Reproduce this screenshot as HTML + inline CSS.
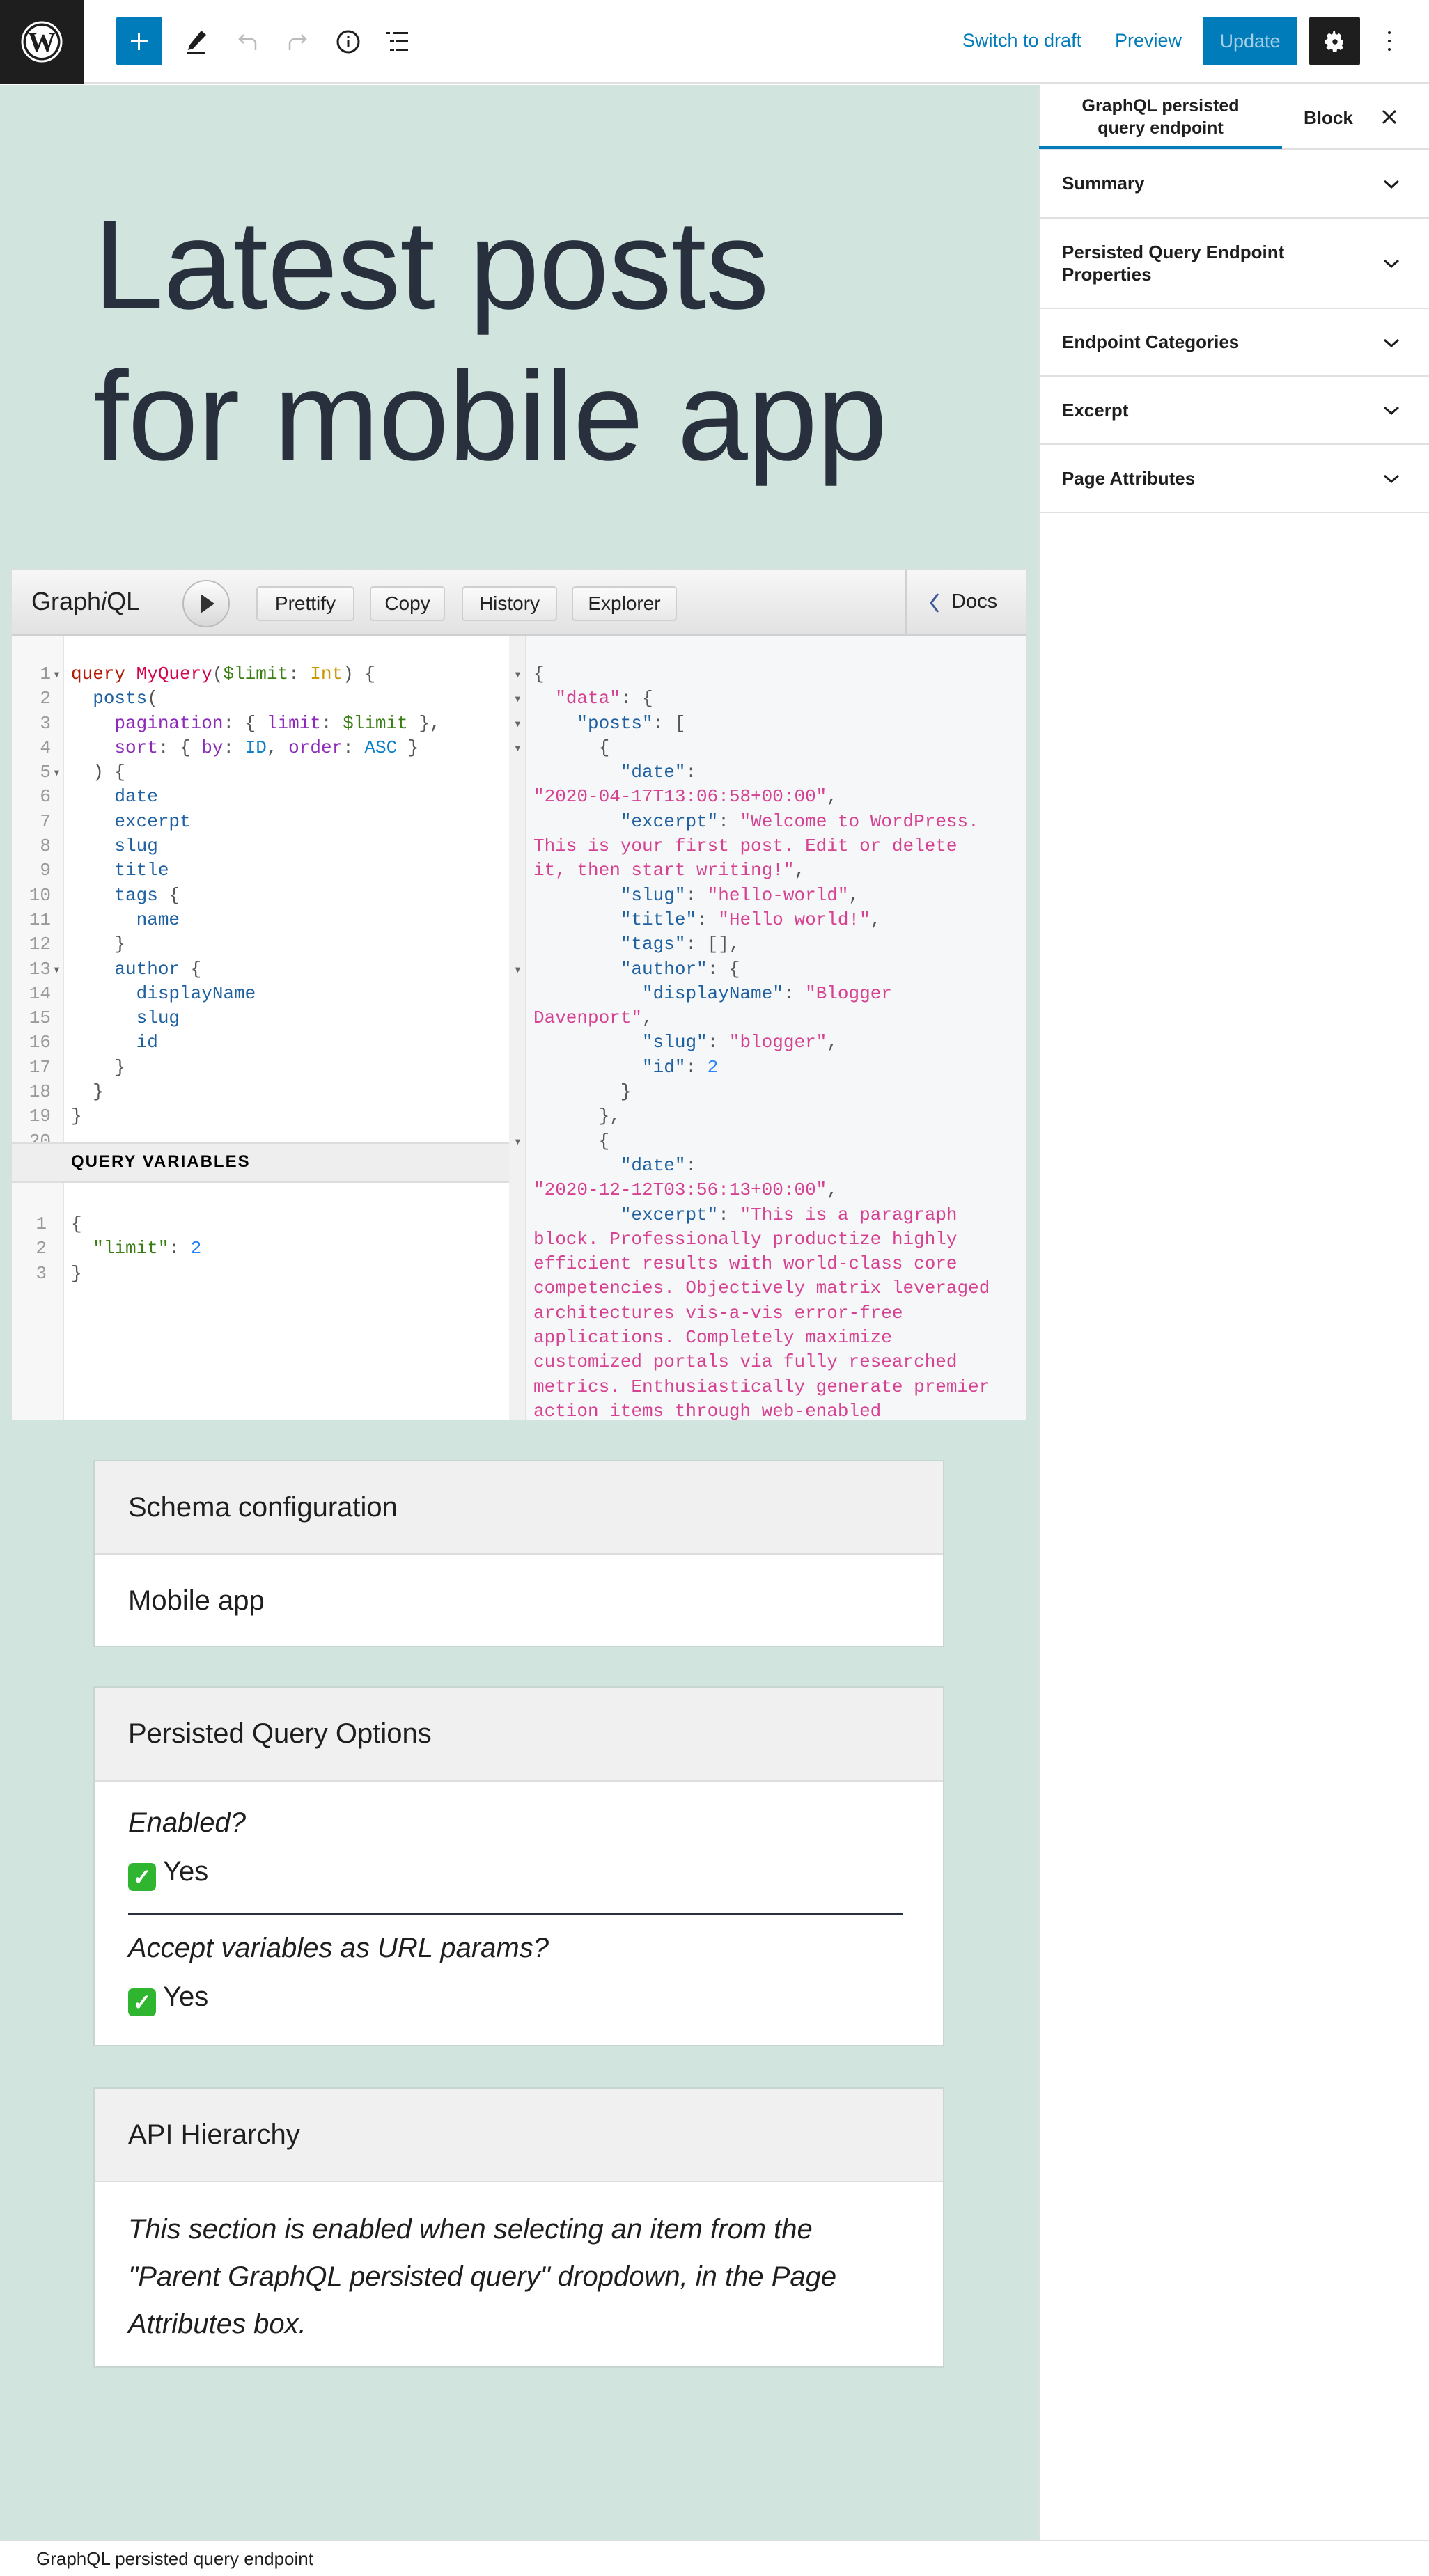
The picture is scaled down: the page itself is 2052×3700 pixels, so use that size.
<!DOCTYPE html>
<html><head><meta charset="utf-8"><style>
*{box-sizing:border-box;margin:0;padding:0}
body{width:2052px;height:3700px;position:relative;background:#fff;font-family:"Liberation Sans",sans-serif;overflow:hidden;color:#1e1e1e}
.a{position:absolute}
.mono{font-family:"Liberation Mono","DejaVu Sans Mono",monospace;font-size:26px;line-height:35.3px;white-space:pre}
.kw{color:#b11a04}.df{color:#d2054e}.vr{color:#397d13}.ty{color:#ca9800}.pr{color:#1f61a0}.ar{color:#8b2bb9}.en{color:#0b7fc7}.st{color:#d64292}.nm{color:#2882f9}.pu{color:#555}
.btn{position:absolute;top:842px;height:50px;border:2px solid #cfcfcf;border-radius:5px;background:linear-gradient(#fbfbfb,#e8e8e8);font-size:28px;line-height:46px;text-align:center;color:#222}
.panel{position:absolute;left:1492px;width:560px;border-bottom:2px solid #e0e0e0;font-size:26px;font-weight:bold;color:#1e1e1e;padding-left:33px;display:flex;align-items:center}
.chev{position:absolute;right:42px;top:50%;margin-top:-10px}
.box{position:absolute;left:134px;width:1222px;background:#fff;border:2px solid #c8d6d0}
.bh{background:#f0f0f0;border-bottom:2px solid #ddd;font-size:40px;padding-left:48px;display:flex;align-items:center}
.bt{font-size:40px;padding-left:48px}
.ck{display:inline-block;width:40px;height:40px;background:#2fb52f;border-radius:7px;color:#fff;font-size:32px;line-height:40px;text-align:center;font-weight:bold;vertical-align:-6px;margin-right:10px}
.fold{font-size:13px;color:#666;line-height:35.3px;white-space:pre}
</style></head><body>
<!-- top bar -->
<div class="a" style="left:0;top:0;width:2052px;height:120px;border-bottom:2px solid #e0e0e0;background:#fff"></div>
<div class="a" style="left:0;top:0;width:120px;height:120px;background:#1e1e1e"></div>
<svg class="a" style="left:30px;top:30px" width="60" height="60" viewBox="0 0 60 60"><circle cx="30" cy="30" r="28" fill="none" stroke="#fff" stroke-width="3"/><circle cx="30" cy="30" r="23" fill="#fff"/><text x="30" y="44" text-anchor="middle" font-family="Liberation Serif" font-size="40" font-weight="bold" fill="#1e1e1e">W</text></svg>
<div class="a" style="left:167px;top:24px;width:66px;height:70px;background:#007cba;border-radius:3px"></div>
<div class="a" style="left:188px;top:58px;width:24px;height:3px;background:#fff"></div>
<div class="a" style="left:198px;top:48px;width:3px;height:24px;background:#fff"></div>
<svg class="a" style="left:265px;top:40px" width="36" height="40" viewBox="0 0 36 40"><path d="M24 4 L31 10 L12 30 L5 32 L7 25 Z" fill="#1e1e1e"/><rect x="4" y="35" width="26" height="3" fill="#1e1e1e"/></svg>
<svg class="a" style="left:340px;top:44px" width="32" height="32" viewBox="0 0 32 32"><path d="M10 6 L4 12 L10 18 M4 12 H20 A7 7 0 0 1 27 19 V28" fill="none" stroke="#bbb" stroke-width="2.5"/></svg>
<svg class="a" style="left:411px;top:44px" width="32" height="32" viewBox="0 0 32 32"><path d="M22 6 L28 12 L22 18 M28 12 H12 A7 7 0 0 0 5 19 V28" fill="none" stroke="#bbb" stroke-width="2.5"/></svg>
<svg class="a" style="left:480px;top:40px" width="40" height="40" viewBox="0 0 40 40"><circle cx="20" cy="20" r="15" fill="none" stroke="#1e1e1e" stroke-width="3"/><rect x="18.5" y="17" width="3" height="11" fill="#1e1e1e"/><rect x="18.5" y="11" width="3" height="3" fill="#1e1e1e"/></svg>
<svg class="a" style="left:552px;top:42px" width="40" height="36" viewBox="0 0 40 36"><rect x="2" y="4" width="6" height="3" fill="#1e1e1e"/><rect x="12" y="4" width="22" height="3" fill="#1e1e1e"/><rect x="8" y="16" width="6" height="3" fill="#1e1e1e"/><rect x="17" y="16" width="17" height="3" fill="#1e1e1e"/><rect x="8" y="28" width="6" height="3" fill="#1e1e1e"/><rect x="17" y="28" width="17" height="3" fill="#1e1e1e"/></svg>
<div class="a" style="left:1382px;top:43px;font-size:27px;color:#007cba">Switch to draft</div>
<div class="a" style="left:1601px;top:43px;font-size:27px;color:#007cba">Preview</div>
<div class="a" style="left:1727px;top:24px;width:136px;height:70px;background:#007cba;border-radius:3px;color:#a6cfe6;font-size:27px;line-height:70px;text-align:center">Update</div>
<div class="a" style="left:1880px;top:24px;width:73px;height:70px;background:#1e1e1e;border-radius:3px"></div>
<svg class="a" style="left:1899px;top:42px" width="36" height="36" viewBox="0 0 24 24"><path fill="#fff" d="M12 8.5a3.5 3.5 0 1 0 0 7 3.5 3.5 0 0 0 0-7zm8 5.2v-3.4l-2.4-.5a6 6 0 0 0-.6-1.5l1.3-2-2.4-2.4-2 1.3a6 6 0 0 0-1.5-.6L12 2h-1.7l-.5 2.4a6 6 0 0 0-1.5.6l-2-1.3-2.4 2.4 1.3 2a6 6 0 0 0-.6 1.5L2 10.3v3.4l2.4.5c.1.5.3 1 .6 1.5l-1.3 2 2.4 2.4 2-1.3c.5.3 1 .5 1.5.6l.5 2.4h3.4l.5-2.4c.5-.1 1-.3 1.5-.6l2 1.3 2.4-2.4-1.3-2c.3-.5.5-1 .6-1.5z"/><circle cx="12" cy="12" r="2.5" fill="#1e1e1e"/></svg>
<div class="a" style="left:1993px;top:45px;width:4px;height:4px;background:#1e1e1e;border-radius:2px;box-shadow:0 12px 0 #1e1e1e,0 24px 0 #1e1e1e"></div>

<!-- canvas -->
<div class="a" style="left:0;top:122px;width:1492px;height:3528px;background:#d1e4dd"></div>
<div class="a" style="left:134px;top:272px;font-size:182px;letter-spacing:-1px;line-height:217px;color:#28303d">Latest posts<br>for mobile app</div>

<!-- GraphiQL -->
<div class="a" style="left:17px;top:818px;width:1457px;height:1222px;background:#fff;box-shadow:0 0 0 1px #ddd"></div>
<div class="a" style="left:17px;top:818px;width:1457px;height:95px;background:linear-gradient(#f7f7f7,#e2e2e2);border-bottom:2px solid #d0d0d0"></div>
<div class="a" style="left:45px;top:843px;font-size:36px;color:#222">Graph<i>i</i>QL</div>
<div class="a" style="left:262px;top:833px;width:68px;height:68px;border-radius:50%;border:2px solid #bbb;background:linear-gradient(#fdfdfd,#d8d8d8)"></div>
<svg class="a" style="left:284px;top:851px" width="28" height="32" viewBox="0 0 28 32"><path d="M4 2 L24 16 L4 30 Z" fill="#333"/></svg>
<div class="btn" style="left:368px;width:141px">Prettify</div>
<div class="btn" style="left:531px;width:108px">Copy</div>
<div class="btn" style="left:663px;width:137px">History</div>
<div class="btn" style="left:821px;width:151px">Explorer</div>
<div class="a" style="left:1300px;top:818px;width:2px;height:95px;background:#d0d0d0"></div>
<svg class="a" style="left:1332px;top:850px" width="20" height="32" viewBox="0 0 20 32"><path d="M15 3 L5 16 L15 29" fill="none" stroke="#3b5998" stroke-width="3"/></svg>
<div class="a" style="left:1366px;top:848px;font-size:29px;color:#222">Docs</div>

<!-- query editor -->
<div class="a" style="left:17px;top:913px;width:75px;height:728px;background:#f7f7f7;border-right:2px solid #e5e5e5"></div>
<div class="a mono" style="left:17px;top:951px;width:56px;text-align:right;color:#999">1
2
3
4
5
6
7
8
9
10
11
12
13
14
15
16
17
18
19
20</div>
<div class="a fold" style="left:75px;top:951px">▼



▼







▼</div>
<div class="a mono" style="left:102px;top:951px"><span class="kw">query</span> <span class="df">MyQuery</span><span class="pu">(</span><span class="vr">$limit</span><span class="pu">:</span> <span class="ty">Int</span><span class="pu">) {</span>
  <span class="pr">posts</span><span class="pu">(</span>
    <span class="ar">pagination</span><span class="pu">: {</span> <span class="ar">limit</span><span class="pu">:</span> <span class="vr">$limit</span> <span class="pu">},</span>
    <span class="ar">sort</span><span class="pu">: {</span> <span class="ar">by</span><span class="pu">:</span> <span class="en">ID</span><span class="pu">,</span> <span class="ar">order</span><span class="pu">:</span> <span class="en">ASC</span> <span class="pu">}</span>
<span class="pu">  ) {</span>
    <span class="pr">date</span>
    <span class="pr">excerpt</span>
    <span class="pr">slug</span>
    <span class="pr">title</span>
    <span class="pr">tags</span> <span class="pu">{</span>
      <span class="pr">name</span>
<span class="pu">    }</span>
    <span class="pr">author</span> <span class="pu">{</span>
      <span class="pr">displayName</span>
      <span class="pr">slug</span>
      <span class="pr">id</span>
<span class="pu">    }</span>
<span class="pu">  }</span>
<span class="pu">}</span></div>
<!-- variables -->
<div class="a" style="left:17px;top:1641px;width:714px;height:58px;background:#eee;border-top:2px solid #ddd;border-bottom:2px solid #ddd"></div>
<div class="a" style="left:102px;top:1655px;font-size:24px;font-weight:bold;letter-spacing:2px;color:#000">QUERY VARIABLES</div>
<div class="a" style="left:17px;top:1699px;width:75px;height:341px;background:#f7f7f7;border-right:2px solid #e5e5e5"></div>
<div class="a mono" style="left:17px;top:1741px;width:50px;text-align:right;color:#999">1
2
3</div>
<div class="a mono" style="left:102px;top:1741px"><span class="pu">{</span>
  <span class="vr">"limit"</span><span class="pu">:</span> <span class="nm">2</span>
<span class="pu">}</span></div>

<!-- results -->
<div class="a" style="left:731px;top:913px;width:743px;height:1127px;background:#f6f7f8;border-left:2px solid #e0e0e0"></div>
<div class="a" style="left:731px;top:913px;width:25px;height:1127px;background:#f1f1f1;border-right:2px solid #e3e3e3"></div>
<div class="a fold" style="left:737px;top:951px">▼
▼
▼
▼








▼






▼</div>
<div class="a mono" style="left:766px;top:951px"><span class="pu">{</span>
  <span class="st">"data"</span><span class="pu">: {</span>
    <span class="pr">"posts"</span><span class="pu">: [</span>
<span class="pu">      {</span>
        <span class="pr">"date"</span><span class="pu">:</span>
<span class="st">"2020-04-17T13:06:58+00:00"</span><span class="pu">,</span>
        <span class="pr">"excerpt"</span><span class="pu">:</span> <span class="st">"Welcome to WordPress.</span>
<span class="st">This is your first post. Edit or delete</span>
<span class="st">it, then start writing!"</span><span class="pu">,</span>
        <span class="pr">"slug"</span><span class="pu">:</span> <span class="st">"hello-world"</span><span class="pu">,</span>
        <span class="pr">"title"</span><span class="pu">:</span> <span class="st">"Hello world!"</span><span class="pu">,</span>
        <span class="pr">"tags"</span><span class="pu">: [],</span>
        <span class="pr">"author"</span><span class="pu">: {</span>
          <span class="pr">"displayName"</span><span class="pu">:</span> <span class="st">"Blogger</span>
<span class="st">Davenport"</span><span class="pu">,</span>
          <span class="pr">"slug"</span><span class="pu">:</span> <span class="st">"blogger"</span><span class="pu">,</span>
          <span class="pr">"id"</span><span class="pu">:</span> <span class="nm">2</span>
<span class="pu">        }</span>
<span class="pu">      },</span>
<span class="pu">      {</span>
        <span class="pr">"date"</span><span class="pu">:</span>
<span class="st">"2020-12-12T03:56:13+00:00"</span><span class="pu">,</span>
        <span class="pr">"excerpt"</span><span class="pu">:</span> <span class="st">"This is a paragraph</span>
<span class="st">block. Professionally productize highly
efficient results with world-class core
competencies. Objectively matrix leveraged
architectures vis-a-vis error-free
applications. Completely maximize
customized portals via fully researched
metrics. Enthusiastically generate premier
action items through web-enabled</span></div>
<div class="a" style="left:0;top:2040px;width:1492px;height:60px;background:#d1e4dd"></div>

<!-- blocks -->
<div class="box" style="top:2097px;height:269px">
 <div class="bh" style="height:134px">Schema configuration</div>
 <div class="bt" style="height:133px;display:flex;align-items:center">Mobile app</div>
</div>
<div class="box" style="top:2422px;height:517px">
 <div class="bh" style="height:135px">Persisted Query Options</div>
 <div class="bt" style="position:absolute;top:172px;font-style:italic">Enabled?</div>
 <div class="bt" style="position:absolute;top:242px"><span class="ck">✓</span>Yes</div>
 <div style="position:absolute;left:48px;top:323px;width:1112px;height:3px;background:#28303d"></div>
 <div class="bt" style="position:absolute;top:352px;font-style:italic">Accept variables as URL params?</div>
 <div class="bt" style="position:absolute;top:422px"><span class="ck">✓</span>Yes</div>
</div>
<div class="box" style="top:2998px;height:403px">
 <div class="bh" style="height:134px">API Hierarchy</div>
 <div class="bt" style="padding-top:34px;font-style:italic;line-height:68px;padding-right:80px">This section is enabled when selecting an item from the "Parent GraphQL persisted query" dropdown, in the Page Attributes box.</div>
</div>

<!-- sidebar -->
<div class="a" style="left:1492px;top:122px;width:560px;height:3528px;background:#fff;border-left:1px solid #e0e0e0"></div>
<div class="a" style="left:1492px;top:213px;width:560px;height:2px;background:#e0e0e0"></div>
<div class="a" style="left:1492px;top:209px;width:349px;height:5px;background:#007cba"></div>
<div class="a" style="left:1492px;top:136px;width:349px;text-align:center;font-size:25px;line-height:32px;font-weight:bold;color:#1e1e1e">GraphQL persisted<br>query endpoint</div>
<div class="a" style="left:1872px;top:154px;font-size:26px;font-weight:bold">Block</div>
<svg class="a" style="left:1983px;top:156px" width="24" height="24" viewBox="0 0 24 24"><path d="M3 3 L21 21 M21 3 L3 21" stroke="#1e1e1e" stroke-width="3"/></svg>
<div class="panel" style="top:215px;height:99px">Summary<svg class="chev" width="24" height="20" viewBox="0 0 24 20"><path d="M2 6 L12 15 L22 6" fill="none" stroke="#1e1e1e" stroke-width="3"/></svg></div>
<div class="panel" style="top:314px;height:130px;line-height:32px">Persisted Query Endpoint<br>Properties<svg class="chev" width="24" height="20" viewBox="0 0 24 20"><path d="M2 6 L12 15 L22 6" fill="none" stroke="#1e1e1e" stroke-width="3"/></svg></div>
<div class="panel" style="top:444px;height:97px">Endpoint Categories<svg class="chev" width="24" height="20" viewBox="0 0 24 20"><path d="M2 6 L12 15 L22 6" fill="none" stroke="#1e1e1e" stroke-width="3"/></svg></div>
<div class="panel" style="top:541px;height:98px">Excerpt<svg class="chev" width="24" height="20" viewBox="0 0 24 20"><path d="M2 6 L12 15 L22 6" fill="none" stroke="#1e1e1e" stroke-width="3"/></svg></div>
<div class="panel" style="top:639px;height:98px">Page Attributes<svg class="chev" width="24" height="20" viewBox="0 0 24 20"><path d="M2 6 L12 15 L22 6" fill="none" stroke="#1e1e1e" stroke-width="3"/></svg></div>

<!-- footer -->
<div class="a" style="left:0;top:3648px;width:2052px;height:52px;background:#fff;border-top:2px solid #e0e0e0"></div>
<div class="a" style="left:52px;top:3660px;font-size:26px;color:#1e1e1e">GraphQL persisted query endpoint</div>
</body></html>
